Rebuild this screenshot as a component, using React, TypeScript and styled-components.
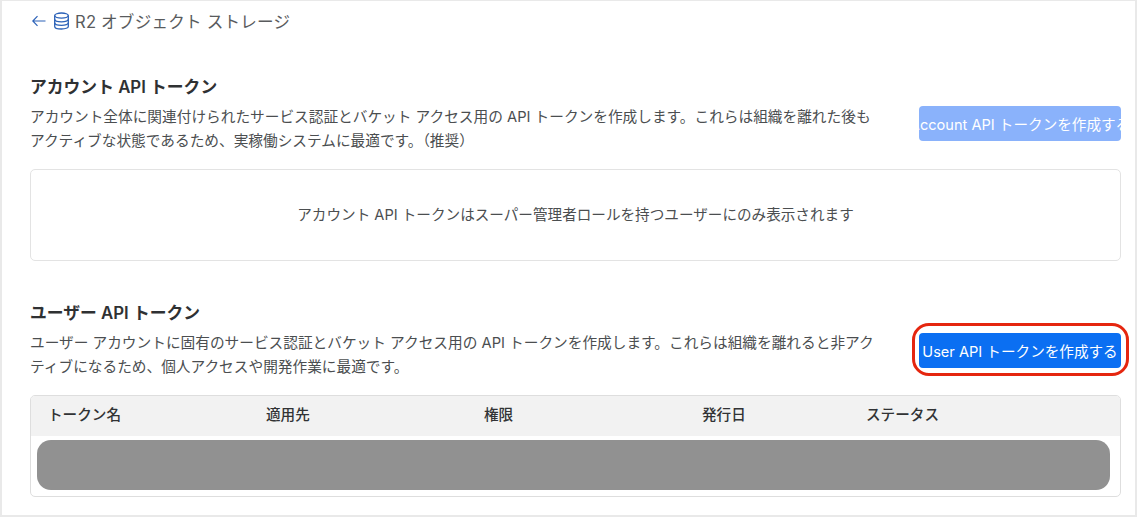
import React from "react";
import styled, { createGlobalStyle } from "styled-components";

const GlobalStyle = createGlobalStyle`
  html, body {
    margin: 0;
    padding: 0;
    background: #fff;
  }
  body {
    font-family: "Inter", "Liberation Sans", "Noto Sans CJK JP", sans-serif;
    color: #36393a;
  }
`;

const Page = styled.div`
  box-sizing: border-box;
  width: 1137px;
  height: 517px;
  overflow: hidden;
  border: 1px solid #e9e9e9;
  border-width: 1px 2px 2px 2px;
  padding: 10px 14px 0 28px;
`;

const Breadcrumb = styled.div`
  display: flex;
  align-items: center;
  height: 20px;
  font-size: 16.6px;
  color: #595b5d;
  letter-spacing: 0.2px;
`;

const BreadcrumbText = styled.span`
  margin-bottom: 1px;
`;

const BackIcon = styled.svg`
  width: 14px;
  height: 14px;
  margin: 0 7px 0 2px;
  color: #2c62b8;
`;

const DbIcon = styled.svg`
  width: 17px;
  height: 18px;
  margin-right: 5px;
  color: #2c62b8;
`;

const Section = styled.section<{ $top: number }>`
  margin-top: ${(p) => p.$top}px;
`;

const Title = styled.h2`
  margin: 0;
  height: 24px;
  line-height: 24px;
  font-size: 16.8px;
  font-weight: 600;
  color: #2f3133;
`;

const IntroRow = styled.div`
  display: flex;
  align-items: flex-start;
  justify-content: space-between;
  margin-top: 6px;
`;

const Description = styled.p`
  margin: 0;
  width: 851px;
  font-size: 14.68px;
  line-height: 24px;
  color: #4b4e50;
`;

const ButtonSlot = styled.div<{ $offset: number }>`
  position: relative;
  flex: none;
  margin-top: ${(p) => p.$offset}px;
`;

const CreateButton = styled.button<{ $disabled?: boolean }>`
  display: flex;
  align-items: center;
  justify-content: center;
  box-sizing: border-box;
  width: 202px;
  height: 35px;
  padding: 0 0 1px;
  border: 0;
  border-radius: 4px;
  overflow: hidden;
  white-space: nowrap;
  font: inherit;
  font-size: 14.6px;
  font-weight: 400;
  color: #fff;
  background: ${(p) => (p.$disabled ? "#8ab2fb" : "#0b6ff2")};
`;

const Highlight = styled.div`
  position: absolute;
  left: -7px;
  right: -8px;
  top: -10px;
  bottom: -8px;
  border: 3px solid #e5260f;
  border-radius: 17px;
  pointer-events: none;
`;

const NoticeBox = styled.div`
  display: flex;
  align-items: center;
  justify-content: center;
  box-sizing: border-box;
  height: 92px;
  margin-top: 16px;
  padding-bottom: 3px;
  border: 1px solid #e3e3e3;
  border-radius: 5px;
  font-size: 14.6px;
  color: #4b4e50;
`;

const Table = styled.div`
  margin-top: 16px;
  height: 102px;
  box-sizing: border-box;
  border: 1px solid #dedede;
  border-radius: 5px;
  overflow: hidden;
`;

const HeaderRow = styled.div`
  display: grid;
  grid-template-columns: 218px 218px 218px 164px 1fr;
  align-items: center;
  box-sizing: border-box;
  height: 40px;
  padding: 0 0 6px 17px;
  background: #f2f2f2;
  font-size: 14.6px;
  font-weight: 500;
  color: #313335;
`;

const MaskedRow = styled.div`
  height: 50px;
  margin: 4px 10px 0 6px;
  background: #919191;
  border-radius: 14px;
`;

const columns = ["トークン名", "適用先", "権限", "発行日", "ステータス"];

const App = () => {
  return (
    <Page>
      <GlobalStyle />
      <Breadcrumb>
        <BackIcon viewBox="0 0 14 14" fill="none" stroke="currentColor" strokeWidth="1.2">
          <path d="M13.5 7H.8M5.5 2.2.8 7l4.7 4.8" />
        </BackIcon>
        <DbIcon viewBox="0 0 17 18" fill="none" stroke="currentColor" strokeWidth="1.3">
          <ellipse cx="8.5" cy="3.6" rx="6.8" ry="2.6" />
          <path d="M1.7 3.6v10.8c0 1.5 3 2.6 6.8 2.6s6.8-1.1 6.8-2.6V3.6" />
          <path d="M1.7 7.2c0 1.5 3 2.6 6.8 2.6s6.8-1.1 6.8-2.6M1.7 10.8c0 1.5 3 2.6 6.8 2.6s6.8-1.1 6.8-2.6" />
        </DbIcon>
        <BreadcrumbText>R2 オブジェクト ストレージ</BreadcrumbText>
      </Breadcrumb>

      <Section $top={44}>
        <Title>アカウント API トークン</Title>
        <IntroRow>
          <Description>
            アカウント全体に関連付けられたサービス認証とバケット アクセス用の API トークンを作成します。これらは組織を離れた後もアクティブな状態であるため、実稼働システムに最適です。（推奨）
          </Description>
          <ButtonSlot $offset={1}>
            <CreateButton $disabled>Account API トークンを作成する</CreateButton>
          </ButtonSlot>
        </IntroRow>
        <NoticeBox>アカウント API トークンはスーパー管理者ロールを持つユーザーにのみ表示されます</NoticeBox>
      </Section>

      <Section $top={40}>
        <Title>ユーザー API トークン</Title>
        <IntroRow>
          <Description>
            ユーザー アカウントに固有のサービス認証とバケット アクセス用の API トークンを作成します。これらは組織を離れると非アクティブになるため、個人アクセスや開発作業に最適です。
          </Description>
          <ButtonSlot $offset={2}>
            <CreateButton>User API トークンを作成する</CreateButton>
            <Highlight />
          </ButtonSlot>
        </IntroRow>
        <Table>
          <HeaderRow>
            {columns.map((name) => (
              <div key={name}>{name}</div>
            ))}
          </HeaderRow>
          <MaskedRow />
        </Table>
      </Section>
    </Page>
  );
};

export default App;
